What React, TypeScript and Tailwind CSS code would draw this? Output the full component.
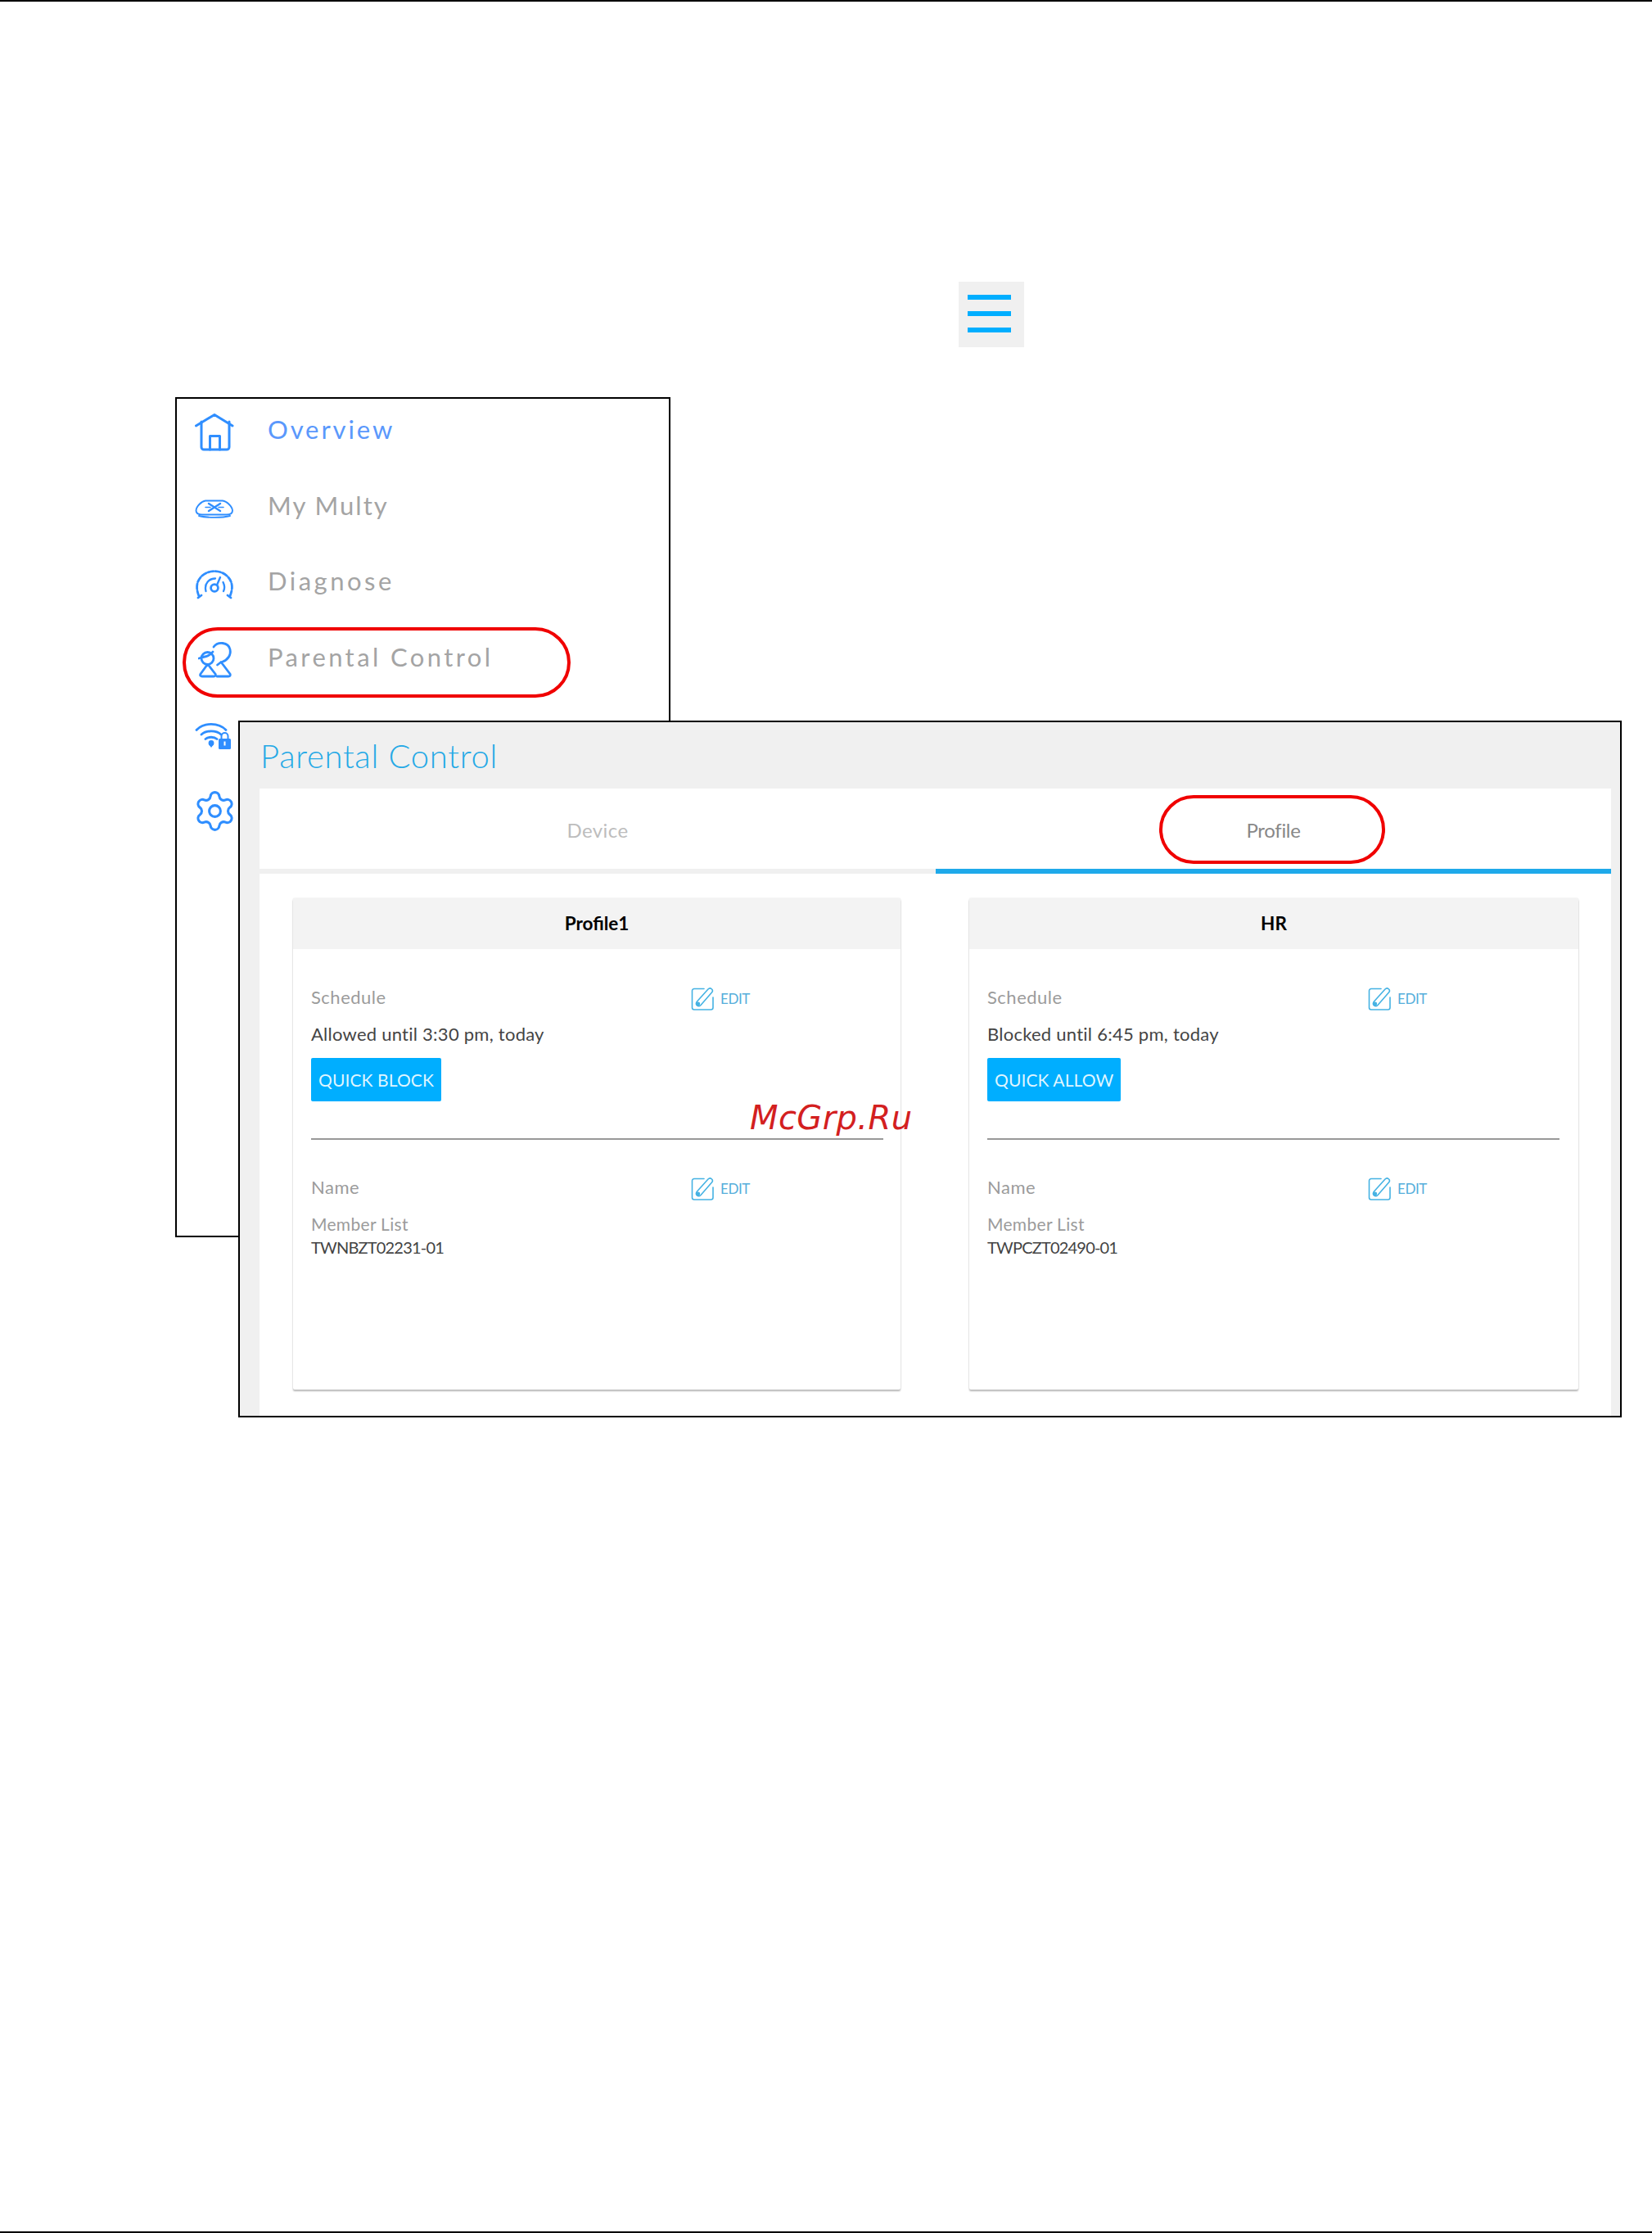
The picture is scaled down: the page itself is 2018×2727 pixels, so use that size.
import { Settings } from "lucide-react";

const BLUE = "#2f8eff";

function HouseIcon() {
  return (
    <svg width="48" height="46" viewBox="0 0 48 46" fill="none" stroke={BLUE} strokeWidth="3" strokeLinecap="round" strokeLinejoin="round">
      <path d="M1.5 15 L24 1.5 L46 15" />
      <path d="M8 10 V41 a3 3 0 0 0 3 3 H39 a3 3 0 0 0 3 -3 V10" />
      <path d="M18.5 44 V27.5 H30.5 V44" />
    </svg>
  );
}

function MultyIcon() {
  return (
    <svg width="48" height="24" viewBox="0 0 48 24" fill="none" stroke={BLUE} strokeWidth="1.9" strokeLinecap="round" strokeLinejoin="round">
      <path d="M13 2.5 H34 C39 3 46 10 46 14.5 C46 18 43 19.5 39 19.5 H9 C5 19.5 1.5 18 1.5 14.5 C1.5 10 8 3 13 2.5 Z" />
      <path d="M5 21 C14 23.5 34 23.5 43 21" />
      <path d="M17 6 L31 15 M31 6 L17 15" strokeWidth="2.4" />
      <path d="M13 10.5 H19 M29 10.5 H35" strokeWidth="1.6" />
    </svg>
  );
}

function GaugeIcon() {
  return (
    <svg width="48" height="38" viewBox="0 0 48 38" fill="none" stroke={BLUE} strokeWidth="2.8" strokeLinecap="round" strokeLinejoin="round">
      <path d="M5 33 C1 23 2 15 8 9 C16 0.5 32 0.5 40 9 C46 15 47 23 43 33" strokeDasharray="6.5 2.4" />
      <path d="M4 35 L8 32 M44 35 L40 32" />
      <path d="M13.5 27 C11 17 18 11.5 25 11.5" strokeWidth="2.3" />
      <path d="M34.5 16 C36.5 20 36.5 24 35 27" strokeWidth="2.3" />
      <circle cx="24" cy="23" r="4.4" strokeWidth="2.8" />
      <path d="M27 19.5 L31 10" strokeWidth="2.4" />
    </svg>
  );
}

function ParentalIcon() {
  return (
    <svg width="42" height="46" viewBox="0 0 42 46" fill="none" stroke={BLUE} strokeWidth="2.8" strokeLinecap="round" strokeLinejoin="round" className="ml-[4px]">
      <path d="M19 7 C24 0 37 1 39 10 C40.5 17 36 23 30 25" />
      <path d="M28 25.5 L39 40 C40 42 39 43 37 43 H23" />
      <path d="M27.5 26 L23.5 29" />
      <circle cx="11.5" cy="21" r="7.5" />
      <path d="M1 21 L6 19.5 C10 19 15 17 18 13" />
      <path d="M11 29 L3 40 C2 42 3 43 5 43 H19 C21 43 22 42 21 40 L12.5 29" />
    </svg>
  );
}

function WifiLockIcon() {
  return (
    <svg width="46" height="34" viewBox="0 0 46 34" fill="none">
      <g stroke={BLUE} strokeWidth="2.8" strokeLinecap="round">
        <path d="M2 9.5 C11 0 29 0 38 9.5" />
        <path d="M8 15 C14 9.5 26 9.5 32 15" />
        <path d="M13 20.5 C16.5 17.5 23.5 17.5 27 20.5" />
      </g>
      <circle cx="20" cy="25.5" r="3.4" fill={BLUE} />
      <path d="M17 27 L20 31 L23 27 Z" fill={BLUE} />
      <rect x="29" y="20" width="15" height="13" rx="1.5" fill={BLUE} />
      <path d="M32.5 20 V17 a4 4 0 0 1 8 0 V20" stroke={BLUE} strokeWidth="2" fill="none" />
      <rect x="35.5" y="23.5" width="2" height="5" fill="#fff" />
    </svg>
  );
}

function EditIcon() {
  return (
    <svg width="30" height="30" viewBox="0 0 30 30" fill="none" className="shrink-0">
      <path d="M17 2.5 H5 a2.5 2.5 0 0 0 -2.5 2.5 V25.5 a2.5 2.5 0 0 0 2.5 2.5 H25.5 a2.5 2.5 0 0 0 2.5 -2.5 V13" stroke="#45b2e3" strokeWidth="1.6" strokeLinecap="round" />
      <path d="M8.5 18 L22 3 a3 3 0 0 1 4.5 4 L13 22.5 C10 25.5 5.5 22 8.5 18 Z" stroke="#45b2e3" strokeWidth="1.6" strokeLinejoin="round" />
      <circle cx="9.8" cy="21" r="2.4" fill="#45b2e3" />
    </svg>
  );
}

function MenuRow({ icon, label, labelClass }: { icon: React.ReactNode; label: string; labelClass?: string }) {
  return (
    <div className="flex h-[92.7px] items-center">
      <div className="flex w-[111px] translate-y-[2px] justify-start pl-[22px]">{icon}</div>
      <span className={"-translate-y-[2px] text-[31px] " + (labelClass ?? "")}>{label}</span>
    </div>
  );
}

function EditButton() {
  return (
    <div className="flex translate-y-[2px] items-center gap-[7px]">
      <EditIcon />
      <span className="text-[17px] leading-[30px] tracking-[-0.4px] text-[#55aedb]">EDIT</span>
    </div>
  );
}

function Card({
  title,
  status,
  action,
  member,
  cardClass,
  bodyClass,
  labelClass,
}: {
  title: string;
  status: string;
  action: string;
  member: string;
  cardClass: string;
  bodyClass: string;
  labelClass: string;
}) {
  return (
    <div className={"flex h-[600px] flex-col rounded-[2px] bg-white shadow-[0_2px_2px_#b9b9b9,0_0_2px_#dcdcdc] " + cardClass}>
      <div className="flex h-[62px] items-center justify-center bg-[#f3f3f3] text-[22.5px] font-bold text-black">{title}</div>
      <div className={"flex flex-col pt-[44px] " + bodyClass}>
        <div className="flex h-[30px] items-center">
          <span className={"-translate-y-[1px] text-[22px] tracking-[0.5px] text-[#9b9b9b] " + labelClass}>Schedule</span>
          <EditButton />
        </div>
        <div className="mt-[15px] h-[30px] text-[22px] leading-[30px] tracking-[0.25px] text-[#444]">{status}</div>
        <div className="mt-[14px] flex h-[53px] w-fit items-center rounded-[2px] bg-[#00aeff] px-[9px] text-[21px] tracking-[0.1px] text-[#dff5ff]">{action}</div>
        <div className="mt-[45px] h-[2px] bg-[#999]" />
        <div className="mt-[43px] flex h-[30px] items-center">
          <span className={"-translate-y-[1px] text-[22px] tracking-[0.5px] text-[#9b9b9b] " + labelClass}>Name</span>
          <EditButton />
        </div>
        <div className="mt-[15px] h-[30px] text-[21px] leading-[30px] tracking-[0.3px] text-[#9b9b9b]">Member List</div>
        <div className="h-[26px] text-[20px] leading-[26px] tracking-[-0.8px] text-[#444]">{member}</div>
      </div>
    </div>
  );
}

export default function App() {
  return (
    <div className="relative h-[2727px] w-[2018px] overflow-hidden bg-white font-['Lato',sans-serif]">
      <div className="h-[2px] bg-black" />

      <div className="ml-[1171px] mt-[342px] flex h-[80px] w-[80px] flex-col gap-[14px] bg-[#f0f0f0] pl-[11px] pt-[16px]">
        <div className="h-[6px] w-[53px] bg-[#00aeff]" />
        <div className="h-[6px] w-[53px] bg-[#00aeff]" />
        <div className="h-[6px] w-[53px] bg-[#00aeff]" />
      </div>

      <div className="ml-[214px] mt-[61px] h-[1026px] w-[605px] border-2 border-black">
        <div className="-mt-[7px]">
          <MenuRow icon={<HouseIcon />} label="Overview" labelClass="tracking-[2.9px] text-[#5a98fc]" />
          <MenuRow icon={<MultyIcon />} label="My Multy" labelClass="tracking-[2px] text-[#a4a4a4]" />
          <MenuRow icon={<GaugeIcon />} label="Diagnose" labelClass="tracking-[3.5px] text-[#a4a4a4]" />
          <div className="relative">
            <MenuRow icon={<ParentalIcon />} label="Parental Control" labelClass="tracking-[3.4px] text-[#a4a4a4]" />
            <div className="absolute left-[7px] top-[8px] h-[86px] w-[474px] rounded-[43px] border-[4px] border-[#f00000]" />
          </div>
          <MenuRow icon={<WifiLockIcon />} label="" />
          <MenuRow icon={<Settings size={55} color={BLUE} strokeWidth={1.35} className="-ml-[3px] -mt-[3px]" />} label="" />
        </div>
      </div>

      <div className="relative z-10 -mt-[631px] ml-[291px] h-[851px] w-[1690px] overflow-hidden border-2 border-black bg-[#f0f0f0]">
        <div className="flex h-[81px] items-center pl-[25px] text-[40px] font-light tracking-[0.7px] text-[#25a9e6]">Parental Control</div>
        <div className="ml-[24px] mr-[11px] h-full bg-white">
          <div className="flex h-[104px]">
            <div className="flex w-[826px] items-center justify-center border-b-[6px] border-[#f0f0f0] pt-[4px] text-[24px] tracking-[0.4px] text-[#bdbdbd]">Device</div>
            <div className="relative flex flex-1 items-center justify-center border-b-[6px] border-[#1ea9ea] pt-[4px] text-[24px] tracking-[-0.3px] text-[#888]">
              Profile
              <div className="absolute left-[273px] top-[8px] h-[84px] w-[276px] rounded-[42px] border-[4px] border-[#f00000]" />
            </div>
          </div>
          <div className="flex gap-[84px] pl-[41px] pt-[30px]">
            <Card
              title="Profile1"
              status="Allowed until 3:30 pm, today"
              action="QUICK BLOCK"
              member="TWNBZT02231-01"
              labelClass="w-[463px]"
              cardClass="w-[742px]"
              bodyClass="pl-[22px] pr-[21px]"
            />
            <Card
              title="HR"
              status="Blocked until 6:45 pm, today"
              action="QUICK ALLOW"
              member="TWPCZT02490-01"
              labelClass="w-[464px]"
              cardClass="w-[744px]"
              bodyClass="pl-[22px] pr-[23px]"
            />
          </div>
        </div>
      </div>

      <div className="absolute left-[916px] top-[1341px] z-20 font-['DejaVu_Sans',sans-serif] text-[40px] italic leading-[48px] tracking-[0.4px] text-[#d3201f]">McGrp.Ru</div>

      <div className="absolute bottom-0 left-0 h-[2px] w-full bg-black" />
    </div>
  );
}
